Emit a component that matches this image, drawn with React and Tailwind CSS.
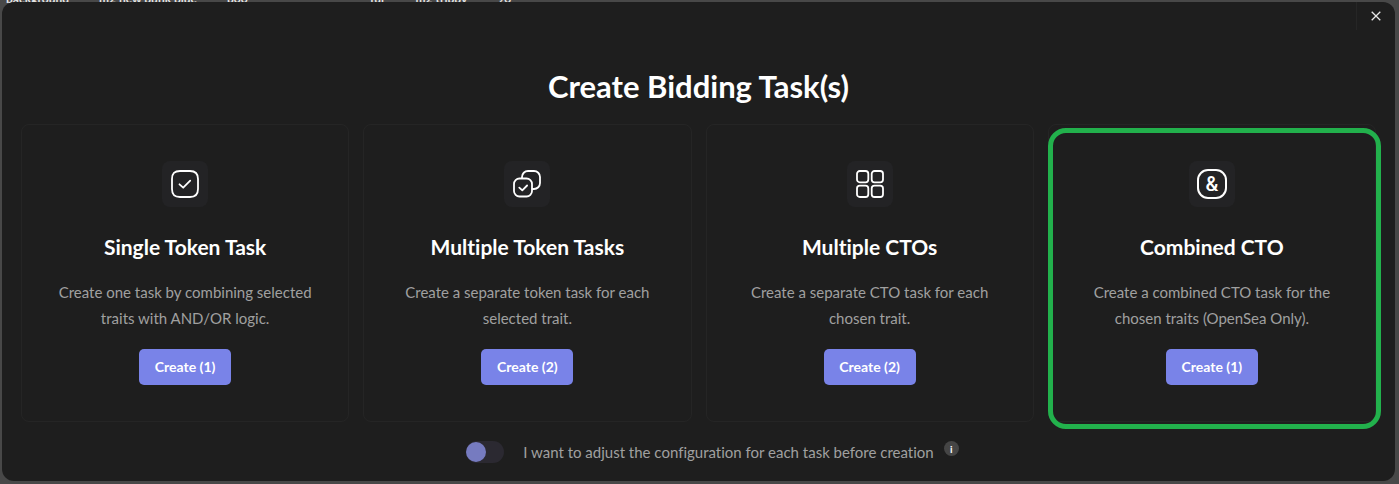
import { useState } from 'react';

const SingleIcon = () => (
  <svg width="30" height="30" viewBox="0 0 30 30" fill="none" stroke="currentColor" strokeWidth="1.8" strokeLinecap="round" strokeLinejoin="round">
    <path d="M10 2h10c5.500 0 8 2.500 8 8v10c0 5.500-2.500 8-8 8H10c-5.500 0-8-2.500-8-8V10c0-5.500 2.500-8 8-8z" />
    <path d="M9.500 15.300l3.700 3.400 7-7" />
  </svg>
);

const MultipleIcon = () => (
  <svg width="30" height="30" viewBox="0 0 30 30" fill="none" stroke="currentColor" strokeWidth="1.8" strokeLinecap="round" strokeLinejoin="round">
    <rect x="2" y="9.500" width="18" height="18" rx="5.500" />
    <path d="M10 9V8a6 6 0 0 1 6-6h6a6 6 0 0 1 6 6v6a6 6 0 0 1-6 6h-1.500" />
    <path d="M7.300 18.700l3 2.700 4.800-4.900" />
  </svg>
);

const GridIcon = () => (
  <svg width="30" height="30" viewBox="0 0 30 30" fill="none" stroke="currentColor" strokeWidth="1.8">
    <rect x="2" y="2" width="11.300" height="11.300" rx="2.800" />
    <rect x="16.700" y="2" width="11.300" height="11.300" rx="2.800" />
    <rect x="2" y="16.700" width="11.300" height="11.300" rx="2.800" />
    <rect x="16.700" y="16.700" width="11.300" height="11.300" rx="2.800" />
  </svg>
);

const AmpersandIcon = () => (
  <span className="flex h-[30px] w-[30px] items-center justify-center rounded-[11px] border-2 border-white font-['Roboto',sans-serif] text-xl leading-5 font-medium">
    &amp;
  </span>
);

const tasks = [
  { title: 'Single Token Task', lines: ['Create one task by combining selected', 'traits with AND/OR logic.'], count: 1, Icon: SingleIcon },
  { title: 'Multiple Token Tasks', lines: ['Create a separate token task for each', 'selected trait.'], count: 2, Icon: MultipleIcon },
  { title: 'Multiple CTOs', lines: ['Create a separate CTO task for each', 'chosen trait.'], count: 2, Icon: GridIcon },
  { title: 'Combined CTO', lines: ['Create a combined CTO task for the', 'chosen traits (OpenSea Only).'], count: 1, Icon: AmpersandIcon, highlighted: true }
];

const TaskCard = ({ title, lines, count, Icon, highlighted }) => (
  <section className="relative flex flex-col items-center rounded-lg border border-[#252525] pt-9 pb-9 text-center">
    <div className="flex h-[46px] w-[46px] items-center justify-center rounded-lg bg-[#232325] text-white">
      <Icon />
    </div>
    <h2 className="mt-[26px] text-[21px] leading-7 font-bold text-white">{title}</h2>
    <p className="mt-[18px] text-[15px] leading-[26px] text-[#a0a0a0]">
      {lines[0]}
      <br />
      {lines[1]}
    </p>
    <button className="mt-[18px] h-9 w-[92px] rounded-[5px] bg-[#7983e8] text-sm font-bold text-white">
      Create ({count})
    </button>
    {highlighted && (
      <div className="pointer-events-none absolute top-[3px] -right-1.5 -bottom-2 -left-px rounded-[18px] border-5 border-[#22b14c]" />
    )}
  </section>
);

// Rows of the page behind the dialog
const Backdrop = () => (
  <div className="flex h-0.5 text-xs leading-none font-bold text-[#e4e4e4]">
    <div className="-mt-[7px] flex h-3 w-[290px] gap-[30px] pl-1.5">
      <span>background</span>
      <span>m2 new punk blue</span>
      <span>b00</span>
    </div>
    <div className="-mt-[7px] flex h-3 gap-[30px] pl-20">
      <span>fur</span>
      <span>m2 trippy</span>
      <span>90</span>
    </div>
  </div>
);

const App = () => {
  const [adjust, setAdjust] = useState(false);

  return (
    <div className="min-h-screen bg-[#484848] pb-[3px] font-['Lato',sans-serif] [font-variant-ligatures:none]">
      <Backdrop />
      <main className="relative mr-1 ml-0.5 rounded-xl bg-[#1e1e1e] px-[19px] pb-[18px]">
        <div className="-mr-[19px] flex justify-end">
          <button aria-label="Close" className="flex h-7 w-[39px] items-center justify-center border-l border-[#262626] text-[#e8e8e8]">
            <svg width="10" height="10" viewBox="0 0 10 10" stroke="currentColor" strokeWidth="1.3">
              <path d="M0.700 0.700l8.600 8.600M9.300 0.700l-8.600 8.600" />
            </svg>
          </button>
        </div>
        <h1 className="mt-9 text-center text-[31px] leading-10 font-bold text-white">Create Bidding Task(s)</h1>
        <div className="mt-[18px] grid grid-cols-4 gap-3.5">
          {tasks.map(task => (
            <TaskCard key={task.title} {...task} />
          ))}
        </div>
        <div className="mt-[19px] flex h-[22px] items-center justify-center pl-7">
          <label className="flex items-center gap-[19px] text-[15px] text-[#a0a0a0]">
            <input
              type="checkbox"
              checked={adjust}
              onChange={(e) => setAdjust(e.target.checked)}
              className="h-[22px] w-[38px] appearance-none rounded-full bg-[#2b2931] before:mt-px before:block before:h-5 before:w-5 before:rounded-full before:bg-[#767bc0] checked:before:ml-[18px]"
            />
            I want to adjust the configuration for each task before creation
          </label>
          <span className="ml-2.5 flex h-[15px] w-[15px] items-center justify-center self-start rounded-full bg-[#454545] text-[10px] leading-none font-bold text-white">
            i
          </span>
        </div>
      </main>
    </div>
  );
};

export default App;
